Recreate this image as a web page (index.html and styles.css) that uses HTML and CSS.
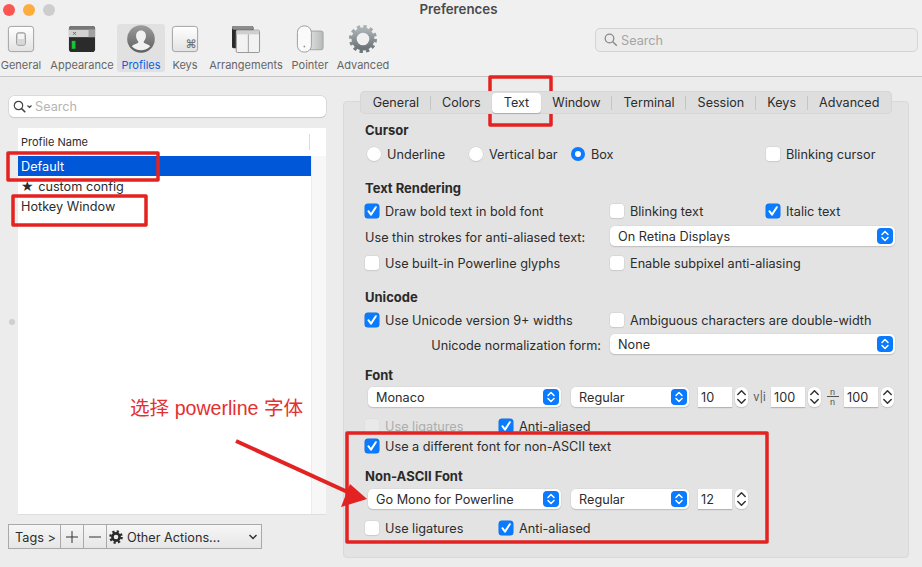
FILE: index.html
```html
<!doctype html>
<html>
<head>
<meta charset="utf-8">
<meta name="viewport" content="width=device-width, initial-scale=1.0">
<link rel="stylesheet" href="styles.css">
<title>Preferences</title>
</head>
<body>
<svg class="defs" width="0" height="0">
  <symbol id="updown" viewBox="0 0 16 16">
    <path d="M5 6.500 8 3.500 11 6.500M5 9.500 8 12.500 11 9.500" fill="none" stroke="currentColor" stroke-width="1.500" stroke-linecap="round" stroke-linejoin="round"/>
  </symbol>
  <symbol id="spin" viewBox="0 0 13 20">
    <path d="M2.800 7.500 6.500 3.800 10.200 7.500M2.800 12.500 6.500 16.200 10.200 12.500" fill="none" stroke="currentColor" stroke-width="1.500" stroke-linecap="round" stroke-linejoin="round"/>
  </symbol>
  <symbol id="tick" viewBox="0 0 14 14">
    <path d="M3.400 7.200 6 10.600 10.800 3.200" fill="none" stroke="#fff" stroke-width="2" stroke-linecap="round" stroke-linejoin="round"/>
  </symbol>
  <linearGradient id="key" x1="0" y1="0" x2="0" y2="1"><stop offset="0" stop-color="#fff"/><stop offset="1" stop-color="#e2e2e2"/></linearGradient>
  <linearGradient id="disc" x1="0" y1="0" x2="0" y2="1"><stop offset="0" stop-color="#9c9c9c"/><stop offset="1" stop-color="#5f5f5f"/></linearGradient>
  <linearGradient id="steel" x1="0" y1="0" x2="0" y2="1"><stop offset="0" stop-color="#a9b0b3"/><stop offset="1" stop-color="#6d7578"/></linearGradient>
  <linearGradient id="pad" x1="0" y1="0" x2="1" y2="0"><stop offset="0" stop-color="#e2e4e3"/><stop offset="1" stop-color="#b5bab8"/></linearGradient>
</svg>

<div class="window">
  <header class="toolbar">
    <div class="titlebar">
      <div class="lights"><i class="light red"></i><i class="light amber"></i><i class="light grey"></i></div>
      <div class="title">Preferences</div>
    </div>
    <div class="toolrow">
      <nav class="tools">
        <div class="tool t-general">
          <svg width="30" height="30" viewBox="0 0 30 30"><rect x="1.500" y="1.500" width="27" height="27" rx="3" fill="url(#key)" stroke="#9d9d9d"/><rect x="10.500" y="8.500" width="9" height="13" rx="1.500" fill="#f4f4f4" stroke="#777"/><rect x="11" y="15" width="8" height="6" fill="#d8d8d8"/></svg>
          <span>General</span>
        </div>
        <div class="tool t-appearance">
          <svg width="30" height="30" viewBox="0 0 30 30"><rect x="1" y="1" width="28" height="28" rx="3" fill="#2b2b2b"/><path d="M1 4a3 3 0 0 1 3-3h22a3 3 0 0 1 3 3v1H1z" fill="#777"/><rect x="1" y="5" width="28" height="8" fill="#d2d2d2"/><rect x="22" y="5" width="7" height="8" fill="#a2a2a2"/><path d="M5.500 7.500 8.500 10.500M8.500 7.500 5.500 10.500" stroke="#666"/><rect x="4" y="17" width="4" height="8.500" fill="#16c436"/></svg>
          <span>Appearance</span>
        </div>
        <div class="tool t-profiles active">
          <svg width="30" height="30" viewBox="0 0 30 30"><circle cx="15" cy="15" r="14.800" fill="url(#disc)"/><path d="M15 6c3.400 0 5.300 2.600 5.300 5.900 0 2.300-1 4.300-2.300 5.500v1.700c1.800 1.200 5.200 1.900 6.900 3.600A14 14 0 0 1 15 27a14 14 0 0 1-9.900-4.300c1.700-1.700 5.100-2.400 6.900-3.600v-1.700c-1.300-1.200-2.300-3.200-2.300-5.500C9.700 8.600 11.600 6 15 6z" fill="#f1f1f1"/></svg>
          <span>Profiles</span>
        </div>
        <div class="tool t-keys">
          <svg width="30" height="30" viewBox="0 0 30 30"><rect x="1.500" y="1.500" width="27" height="27" rx="3" fill="url(#key)" stroke="#9d9d9d"/><text x="15.500" y="25" class="cmd">⌘</text></svg>
          <span>Keys</span>
        </div>
        <div class="tool t-arrangements">
          <svg width="30" height="30" viewBox="0 0 30 30"><rect x="0" y="1" width="23" height="24" rx="2" fill="#2a2a2a"/><rect x="0" y="1" width="23" height="4" rx="2" fill="#8d8d8d"/><rect x="4.500" y="5.500" width="25" height="24" rx="1.500" fill="#f2f2f2" stroke="#8f8f8f"/><rect x="5" y="6" width="24" height="4" fill="#cfcfcf"/><path d="M17.500 10v19" stroke="#9a9a9a"/></svg>
          <span>Arrangements</span>
        </div>
        <div class="tool t-pointer">
          <svg width="30" height="30" viewBox="0 0 30 30"><rect x="13" y="6.500" width="16" height="20" rx="2" fill="url(#pad)" stroke="#a0a0a0"/><rect x="1.500" y="1" width="15" height="28" rx="7" fill="#fafafa" stroke="#999"/><circle cx="9" cy="23" r="1" fill="#999"/></svg>
          <span>Pointer</span>
        </div>
        <div class="tool t-advanced">
          <svg width="30" height="30" viewBox="0 0 30 30"><circle cx="15" cy="15" r="13.300" fill="none" stroke="url(#steel)" stroke-width="3.400" stroke-dasharray="3.600 3.364"/><circle cx="15" cy="15" r="9.500" fill="none" stroke="url(#steel)" stroke-width="5.500"/></svg>
          <span>Advanced</span>
        </div>
      </nav>
      <div class="toolsearch">
        <svg width="14" height="14" viewBox="0 0 14 14"><circle cx="5.500" cy="5.500" r="4.300" fill="none" stroke="#8a8a8a" stroke-width="1.300"/><path d="M8.800 8.800 12.800 12.800" stroke="#8a8a8a" stroke-width="1.500"/></svg>
        <span>Search</span>
      </div>
    </div>
  </header>

  <div class="main">
    <aside class="sidebar">
      <div class="profile-search">
        <svg width="21" height="14" viewBox="0 0 21 14"><circle cx="5.500" cy="5.500" r="4.200" fill="none" stroke="#444" stroke-width="1.200"/><path d="M8.600 8.600 12.300 12.300" stroke="#444" stroke-width="1.500"/><path d="M14.500 5.500 16.500 7.500 18.500 5.500" fill="none" stroke="#444" stroke-width="1.200"/></svg>
        <span>Search</span>
      </div>
      <div class="list-wrap">
        <div class="handle"></div>
        <div class="list">
          <div class="list-head"><span>Profile Name</span></div>
          <div class="list-body">
            <div class="rows">
              <div class="item selected">Default</div>
              <div class="item"><span class="star">★</span> custom config</div>
              <div class="item">Hotkey Window</div>
            </div>
            <div class="gutter"></div>
          </div>
        </div>
      </div>
      <div class="actions">
        <div class="act act-tags">Tags &gt;</div>
        <div class="act act-sign"><svg width="14" height="14" viewBox="0 0 14 14"><path d="M7 1v12M1 7h12" stroke="#333"/></svg></div>
        <div class="act act-sign"><svg width="14" height="14" viewBox="0 0 14 14"><path d="M1 7h12" stroke="#333"/></svg></div>
        <div class="act act-other">
          <svg width="14" height="14" viewBox="0 0 14 14"><circle cx="7" cy="7" r="3.600" fill="none" stroke="#2b2b2b" stroke-width="2.600"/><circle cx="7" cy="7" r="5.600" fill="none" stroke="#2b2b2b" stroke-width="2.400" stroke-dasharray="2.200 2.198"/></svg>
          <span>Other Actions...</span>
          <svg class="act-chev" width="10" height="8" viewBox="0 0 10 8"><path d="M1.500 2 5 5.500 8.500 2" fill="none" stroke="#333" stroke-width="1.500"/></svg>
        </div>
      </div>
    </aside>

    <section class="prefs">
      <div class="tabs">
        <span class="tab">General</span><span class="tab sep">Colors</span><span class="tab current">Text</span><span class="tab">Window</span><span class="tab sep">Terminal</span><span class="tab sep">Session</span><span class="tab sep">Keys</span><span class="tab sep">Advanced</span>
      </div>
      <div class="panel">
        <h4 class="head first">Cursor</h4>
        <div class="row radios s4">
          <label class="opt w-underline"><i class="radio"></i>Underline</label>
          <label class="opt w-vbar"><i class="radio"></i>Vertical bar</label>
          <label class="opt w-box"><i class="radio on"></i>Box</label>
          <label class="opt"><i class="check"></i>Blinking cursor</label>
        </div>

        <h4 class="head s14">Text Rendering</h4>
        <div class="row cols s3">
          <label class="opt"><i class="check on"><svg><use href="#tick"/></svg></i>Draw bold text in bold font</label>
          <label class="opt"><i class="check"></i>Blinking text</label>
          <label class="opt"><i class="check on"><svg><use href="#tick"/></svg></i>Italic text</label>
        </div>
        <div class="row s5">
          <span class="side">Use thin strokes for anti-aliased text:</span>
          <div class="select wide"><span>On Retina Displays</span><b class="cap"><svg><use href="#updown"/></svg></b></div>
        </div>
        <div class="row cols s7">
          <label class="opt"><i class="check"></i>Use built-in Powerline glyphs</label>
          <label class="opt span2"><i class="check"></i>Enable subpixel anti-aliasing</label>
        </div>

        <h4 class="head s14">Unicode</h4>
        <div class="row cols s3">
          <label class="opt"><i class="check on"><svg><use href="#tick"/></svg></i>Use Unicode version 9+ widths</label>
          <label class="opt span2"><i class="check"></i>Ambiguous characters are double-width</label>
        </div>
        <div class="row s4">
          <span class="side right">Unicode normalization form:</span>
          <div class="select wide"><span>None</span><b class="cap"><svg><use href="#updown"/></svg></b></div>
        </div>

        <h4 class="head s11">Font</h4>
        <div class="row fontrow s2">
          <div class="select w-family"><span>Monaco</span><b class="cap"><svg><use href="#updown"/></svg></b></div>
          <div class="select w-weight"><span>Regular</span><b class="cap"><svg><use href="#updown"/></svg></b></div>
          <div class="num">10</div><div class="stepper"><svg><use href="#spin"/></svg></div>
          <span class="glyph-vli">v|i</span>
          <div class="num">100</div><div class="stepper"><svg><use href="#spin"/></svg></div>
          <span class="glyph-nn"><em>n</em><em>n</em></span>
          <div class="num">100</div><div class="stepper"><svg><use href="#spin"/></svg></div>
        </div>
        <div class="row pair s9">
          <label class="opt off"><i class="check"></i>Use ligatures</label>
          <label class="opt"><i class="check on"><svg><use href="#tick"/></svg></i>Anti-aliased</label>
        </div>
        <div class="row">
          <label class="opt"><i class="check on"><svg><use href="#tick"/></svg></i>Use a different font for non-ASCII text</label>
        </div>

        <h4 class="head s10">Non-ASCII Font</h4>
        <div class="row fontrow s3">
          <div class="select w-family"><span>Go Mono for Powerline</span><b class="cap"><svg><use href="#updown"/></svg></b></div>
          <div class="select w-weight"><span>Regular</span><b class="cap"><svg><use href="#updown"/></svg></b></div>
          <div class="num">12</div><div class="stepper"><svg><use href="#spin"/></svg></div>
        </div>
        <div class="row pair s9">
          <label class="opt"><i class="check"></i>Use ligatures</label>
          <label class="opt"><i class="check on"><svg><use href="#tick"/></svg></i>Anti-aliased</label>
        </div>
      </div>
    </section>
  </div>

  <svg class="marks" width="922" height="567" viewBox="0 0 922 567">
    <g fill="none" stroke="#e32222" stroke-width="3.500" stroke-linejoin="round">
      <rect x="8" y="153" width="150" height="27"/>
      <rect x="13" y="196" width="133" height="29"/>
      <rect x="490" y="77" width="61" height="48"/>
      <rect x="347" y="433" width="420" height="109"/>
    </g>
    <path d="M236 441 352 494" stroke="#e32222" stroke-width="4"/>
    <path d="M350 484 367 499 341 507z" fill="#e32222"/>
  </svg>
  <div class="note">选择 powerline 字体</div>
</div>
</body>
</html>
```

FILE: styles.css
```css
* {
    box-sizing: border-box;
}
html, body {
    margin: 0;
    padding: 0;
}
body {
    font-family: "Inter", "Liberation Sans", sans-serif;
    font-size: 12.7px;
    color: #2c2c2c;
    background-color: #ececec;
}
.defs {
    position: absolute;
}
.window {
    position: relative;
    width: 922px;
    height: 567px;
    overflow: hidden;
    display: flex;
    flex-direction: column;
}

/* toolbar */
.toolbar {
    height: 77px;
    background-color: #f0f0f0;
    border-bottom: 1px solid #c6c6c6;
    flex: none;
}
.titlebar {
    height: 20px;
    display: flex;
    align-items: center;
}
.lights {
    display: flex;
    gap: 8px;
    padding-left: 3px;
}
.light {
    width: 12px;
    height: 12px;
    border-radius: 50%;
}
.red { background-color: #fc5652; }
.amber { background-color: #fdad3e; }
.grey { background-color: #cdcdcd; }
.title {
    flex: 1;
    margin: -2px 0 0 -60px;
    text-align: center;
    font-size: 13.3px;
    font-weight: 600;
    color: #4a4a4a;
}
.toolrow {
    display: flex;
    justify-content: space-between;
    padding-right: 4px;
}
.tools {
    display: flex;
}
.tool {
    height: 48px;
    margin-top: 4px;
    display: flex;
    flex-direction: column;
    align-items: center;
    border-radius: 3px;
    font-size: 11px;
    color: #666;
    white-space: nowrap;
    padding-top: 1px;
}
.tool span {
    margin-top: 5px;
}
.t-general { width: 42px; }
.t-appearance { width: 66px; margin-left: 7px; }
.t-profiles { width: 48px; margin-left: 2px; }
.t-keys { width: 40px; }
.t-arrangements { width: 78px; margin-left: 2px; }
.t-pointer { width: 44px; margin-left: 3px; }
.t-advanced { width: 54px; margin-left: 4px; }
.active {
    background-color: #e1e1e1;
    color: #0a62e0;
}
.cmd {
    font-family: "DejaVu Sans", sans-serif;
    font-size: 12px;
    fill: #666;
}
.toolsearch {
    width: 323px;
    height: 24px;
    margin-top: 8px;
    display: flex;
    align-items: center;
    gap: 3px;
    padding-left: 8px;
    border: 1px solid #d4d4d4;
    border-radius: 5px;
    background-color: #ececec;
    color: #a5a5a5;
}

.main {
    flex: 1;
    display: flex;
    min-height: 0;
}

/* profile list */
.sidebar {
    width: 342px;
    flex: none;
    padding: 19px 16px 0 9px;
    display: flex;
    flex-direction: column;
}
.profile-search {
    height: 21px;
    display: flex;
    align-items: center;
    gap: 1px;
    padding-left: 4px;
    background-color: #fff;
    border-radius: 5px;
    box-shadow: 0 0 0 0.5px #c8c8c8, 0 1px 1px rgba(0, 0, 0, 0.15);
    color: #b5b5b5;
}
.list-wrap {
    height: 387px;
    margin-top: 11px;
    display: flex;
    align-items: center;
}
.handle {
    width: 9px;
    flex: none;
}
.handle:before {
    content: "";
    display: block;
    width: 6px;
    height: 6px;
    border-radius: 50%;
    background-color: #cfcfcf;
}
.list {
    flex: 1;
    height: 100%;
    background-color: #fff;
    border-bottom: 1px solid #dedede;
    display: flex;
    flex-direction: column;
}
.list-head {
    height: 28px;
    flex: none;
    padding: 7px 0 0 3px;
    font-size: 11px;
    line-height: 14px;
    width: 293px;
    position: relative;
}
.list-head:after {
    content: "";
    position: absolute;
    right: 1px;
    top: 6px;
    height: 16px;
    border-right: 1px solid #ddd;
}
.list-body {
    flex: 1;
    display: flex;
}
.rows {
    width: 294px;
    border-right: 1px solid #ececec;
}
.gutter {
    flex: 1;
    background-color: #f7f7f7;
}
.item {
    height: 20px;
    line-height: 22px;
    padding-left: 3px;
    color: #2c2c2c;
}
.selected {
    background-color: #0058d8;
    color: #fff;
}
.star {
    font-family: "DejaVu Sans", sans-serif;
    font-size: 14px;
    line-height: 18px;
    margin-right: 1px;
}
.actions {
    display: flex;
    width: 254px;
    height: 25px;
    margin: 9px 0 0 -1px;
    border: 1px solid #a9a9a9;
    background-image: linear-gradient(#f6f6f6, #e6e6e6);
}
.act {
    display: flex;
    align-items: center;
    border-right: 1px solid #a9a9a9;
    padding-top: 1px;
}
.act-tags {
    width: 52px;
    padding-left: 6px;
}
.act-sign {
    width: 23px;
    justify-content: center;
    padding-top: 0;
}
.act-other {
    flex: 1;
    border-right: 0;
    padding-left: 2px;
    gap: 4px;
}
.act-chev {
    margin-left: auto;
    margin-right: 3px;
}

/* text settings panel */
.prefs {
    flex: 1;
    padding: 14px 13px 0 1px;
    display: flex;
    flex-direction: column;
    align-items: center;
}
.tabs {
    height: 23px;
    display: flex;
    align-items: center;
    background-color: #dedede;
    border-radius: 5px;
    box-shadow: inset 0 0 0 1px #d6d6d6;
    position: relative;
    z-index: 1;
    padding: 0 1px;
    flex: none;
    font-size: 12.6px;
}
.tab {
    padding: 0 11.5px;
    line-height: 20px;
    position: relative;
}
.tab.sep:before {
    content: "";
    position: absolute;
    left: -1px;
    top: 3px;
    height: 14px;
    border-left: 1px solid #c5c5c5;
}
.current {
    background-color: #fff;
    border-radius: 4px;
    box-shadow: 0 1px 1px rgba(0, 0, 0, 0.2);
}
.panel {
    width: 566px;
    height: 457px;
    margin-top: -13px;
    padding: 0 14px 0 21px;
    background-color: #e3e3e3;
    border: 1px solid #d9d9d9;
    border-radius: 4px;
    flex: none;
}
.head {
    margin: 0;
    height: 20px;
    line-height: 20px;
    font-size: 13px;
    font-weight: 700;
    color: #2a2a2a;
}
.first { margin-top: 18px; }
.row {
    height: 20px;
    display: flex;
    align-items: center;
    white-space: nowrap;
}
.s2 { margin-top: 2px; }
.s3 { margin-top: 3px; }
.s4 { margin-top: 4px; }
.s5 { margin-top: 5px; }
.s7 { margin-top: 7px; }
.s9 { margin-top: 9px; }
.s10 { margin-top: 10px; }
.s11 { margin-top: 11px; }
.s14 { margin-top: 14px; }
.cols {
    display: grid;
    grid-template-columns: 245px 156px 1fr;
}
.span2 { grid-column: span 2; }
.pair {
    display: grid;
    grid-template-columns: 134px 1fr;
}
.opt {
    display: flex;
    align-items: center;
    gap: 6px;
}
.off {
    color: #adadad;
}
.w-underline { width: 102px; padding-left: 2px; }
.w-vbar { width: 102px; padding-left: 2px; }
.w-box { width: 197px; padding-left: 2px; }
.check, .radio {
    width: 14px;
    height: 14px;
    flex: none;
    background-color: #fff;
    box-shadow: 0 0 0 0.5px #cfcfcf, 0 1px 1px rgba(0, 0, 0, 0.12);
    display: block;
}
.check {
    border-radius: 3px;
}
.check svg {
    width: 14px;
    height: 14px;
    display: block;
}
.check.on {
    background-color: #0a7aff;
    box-shadow: 0 0 0 0.5px #0a6ee0;
}
.off .check {
    background-color: #e9e9e9;
    box-shadow: 0 0 0 0.5px #dcdcdc;
}
.radio {
    border-radius: 50%;
}
.radio.on {
    background-color: #fff;
    border: 4.5px solid #0a7aff;
    box-shadow: none;
}
.side {
    width: 245px;
    flex: none;
    padding-top: 2px;
}
.right {
    text-align: right;
    padding-right: 9px;
}
.select {
    height: 20px;
    background-color: #fff;
    border-radius: 5px;
    box-shadow: 0 0 0 0.5px #d6d6d6, 0 1px 1px rgba(0, 0, 0, 0.25);
    display: flex;
    align-items: center;
    justify-content: space-between;
    padding: 0 2px 0 8px;
    flex: none;
}
.wide { width: 285px; }
.w-family { width: 193px; margin-left: 3px; }
.w-weight { width: 118px; margin-left: 10px; }
.cap {
    width: 16px;
    height: 16px;
    border-radius: 4px;
    background-color: #0a7aff;
    color: #fff;
    display: block;
}
.cap svg, .stepper svg {
    width: 100%;
    height: 100%;
    display: block;
}
.num {
    width: 34px;
    height: 20px;
    margin-left: 9px;
    padding: 3px 0 0 3px;
    background-color: #fff;
    box-shadow: 0 1px 1px rgba(0, 0, 0, 0.2);
    flex: none;
}
.stepper {
    width: 13px;
    height: 20px;
    margin-left: 3px;
    border-radius: 6px;
    background-color: #fff;
    box-shadow: 0 0 0 0.5px #d6d6d6, 0 1px 1px rgba(0, 0, 0, 0.2);
    color: #333;
    flex: none;
}
.stepper + .glyph-vli, .stepper + .glyph-nn {
    width: 23px;
    margin-right: -9px;
    text-align: center;
    flex: none;
    color: #555;
    font-size: 11px;
}
.stepper + .glyph-nn {
    display: flex;
    flex-direction: column;
    align-items: center;
    font-family: "Liberation Sans", sans-serif;
    font-size: 9px;
    line-height: 10px;
}
.glyph-nn em {
    font-style: normal;
    width: 12px;
    height: 10px;
    text-align: center;
}
.glyph-nn em:first-child {
    border-bottom: 1px solid #555;
}

/* annotations on top of the screenshot */
.marks {
    position: absolute;
    left: 0;
    top: 0;
    pointer-events: none;
}
.note {
    position: absolute;
    left: 130px;
    top: 395px;
    font-family: "Liberation Sans", "Noto Sans CJK SC", sans-serif;
    font-size: 19.6px;
    line-height: 26px;
    color: #e33030;
    white-space: nowrap;
}
```
